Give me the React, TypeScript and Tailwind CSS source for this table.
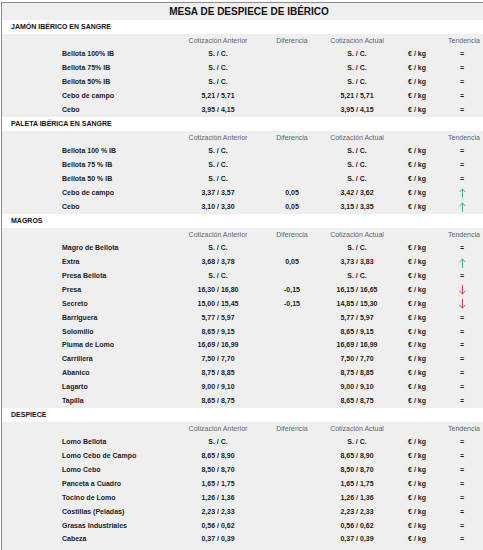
import React from "react";

type Trend = "eq" | "up" | "down";

type Row = {
  name: string;
  before: string;
  diff?: string;
  now: string;
  trend: Trend;
};

type Section = {
  title: string;
  rows: Row[];
};

const SECTIONS: Section[] = [
  {
    title: "JAMÓN IBÉRICO EN SANGRE",
    rows: [
      { name: "Bellota 100% IB", before: "S. / C.", now: "S. / C.", trend: "eq" },
      { name: "Bellota 75% IB", before: "S. / C.", now: "S. / C.", trend: "eq" },
      { name: "Bellota 50% IB", before: "S. / C.", now: "S. / C.", trend: "eq" },
      { name: "Cebo de campo", before: "5,21 / 5,71", now: "5,21 / 5,71", trend: "eq" },
      { name: "Cebo", before: "3,95 / 4,15", now: "3,95 / 4,15", trend: "eq" },
    ],
  },
  {
    title: "PALETA IBÉRICA EN SANGRE",
    rows: [
      { name: "Bellota 100 % IB", before: "S. / C.", now: "S. / C.", trend: "eq" },
      { name: "Bellota 75 % IB", before: "S. / C.", now: "S. / C.", trend: "eq" },
      { name: "Bellota 50 % IB", before: "S. / C.", now: "S. / C.", trend: "eq" },
      { name: "Cebo de campo", before: "3,37 / 3,57", diff: "0,05", now: "3,42 / 3,62", trend: "up" },
      { name: "Cebo", before: "3,10 / 3,30", diff: "0,05", now: "3,15 / 3,35", trend: "up" },
    ],
  },
  {
    title: "MAGROS",
    rows: [
      { name: "Magro de Bellota", before: "S. / C.", now: "S. / C.", trend: "eq" },
      { name: "Extra", before: "3,68 / 3,78", diff: "0,05", now: "3,73 / 3,83", trend: "up" },
      { name: "Presa Bellota", before: "S. / C.", now: "S. / C.", trend: "eq" },
      { name: "Presa", before: "16,30 / 16,80", diff: "-0,15", now: "16,15 / 16,65", trend: "down" },
      { name: "Secreto", before: "15,00 / 15,45", diff: "-0,15", now: "14,85 / 15,30", trend: "down" },
      { name: "Barriguera", before: "5,77 / 5,97", now: "5,77 / 5,97", trend: "eq" },
      { name: "Solomillo", before: "8,65 / 9,15", now: "8,65 / 9,15", trend: "eq" },
      { name: "Pluma de Lomo", before: "16,69 / 16,99", now: "16,69 / 16,99", trend: "eq" },
      { name: "Carrillera", before: "7,50 / 7,70", now: "7,50 / 7,70", trend: "eq" },
      { name: "Abanico", before: "8,75 / 8,85", now: "8,75 / 8,85", trend: "eq" },
      { name: "Lagarto", before: "9,00 / 9,10", now: "9,00 / 9,10", trend: "eq" },
      { name: "Tapilla", before: "8,65 / 8,75", now: "8,65 / 8,75", trend: "eq" },
    ],
  },
  {
    title: "DESPIECE",
    rows: [
      { name: "Lomo Bellota", before: "S. / C.", now: "S. / C.", trend: "eq" },
      { name: "Lomo Cebo de Campo", before: "8,65 / 8,90", now: "8,65 / 8,90", trend: "eq" },
      { name: "Lomo Cebo", before: "8,50 / 8,70", now: "8,50 / 8,70", trend: "eq" },
      { name: "Panceta a Cuadro", before: "1,65 / 1,75", now: "1,65 / 1,75", trend: "eq" },
      { name: "Tocino de Lomo", before: "1,26 / 1,36", now: "1,26 / 1,36", trend: "eq" },
      { name: "Costillas (Peladas)", before: "2,23 / 2,33", now: "2,23 / 2,33", trend: "eq" },
      { name: "Grasas Industriales", before: "0,56 / 0,62", now: "0,56 / 0,62", trend: "eq" },
      { name: "Cabeza", before: "0,37 / 0,39", now: "0,37 / 0,39", trend: "eq" },
    ],
  },
];

const GRID =
  "grid grid-cols-[60px_118px_76px_72px_58px_62px_28px] h-[13.86px] items-center";

function TrendIcon({ trend }: { trend: Trend }) {
  if (trend === "eq") {
    return <span className="font-bold text-[#222]">=</span>;
  }
  const up = trend === "up";
  return (
    <svg
      width="7"
      height="10"
      viewBox="0 0 7 10"
      fill="none"
      stroke={up ? "#3dbb6c" : "#d0453b"}
      strokeWidth="1"
      strokeLinecap="round"
      strokeLinejoin="round"
      className="mx-auto"
    >
      {up ? (
        <>
          <path d="M3.5 9.5V1" />
          <path d="M0.8 3.8L3.5 1L6.2 3.8" />
        </>
      ) : (
        <>
          <path d="M3.5 0.5V9" />
          <path d="M0.8 6.2L3.5 9L6.2 6.2" />
        </>
      )}
    </svg>
  );
}

function ColumnHeader() {
  return (
    <div className={`${GRID} text-[7px] text-[#666]`}>
      <span />
      <span />
      <span className="text-center whitespace-nowrap">Cotización Anterior</span>
      <span className="text-center">Diferencia</span>
      <span className="text-center whitespace-nowrap">Cotización Actual</span>
      <span />
      <span className="text-center">Tendencia</span>
    </div>
  );
}

function DataRow({ row }: { row: Row }) {
  return (
    <div className={`${GRID} text-[7px] font-bold text-[#222]`}>
      <span />
      <span className="whitespace-nowrap">{row.name}</span>
      <span className="text-center whitespace-nowrap">{row.before}</span>
      <span className="text-center">{row.diff ?? ""}</span>
      <span className="text-center whitespace-nowrap">{row.now}</span>
      <span className="text-center">€ / kg</span>
      <span className="flex justify-center">
        <TrendIcon trend={row.trend} />
      </span>
    </div>
  );
}

export default function App() {
  return (
    <div className="h-screen w-full overflow-hidden bg-white font-['Liberation_Sans',Arial,sans-serif]">
      <div className="ml-px mt-[2px] w-[495px] border-l border-t border-[#8c8c8c] bg-[#efefef]">
        <div className="flex h-[17px] items-center justify-center text-[10px] font-bold text-[#111]">
          MESA DE DESPIECE DE IBÉRICO
        </div>
        {SECTIONS.map((section) => (
          <div key={section.title}>
            <div className="flex h-[13.86px] items-center bg-white pl-[9px] text-[7px] font-bold text-[#111]">
              {section.title}
            </div>
            <ColumnHeader />
            {section.rows.map((row) => (
              <DataRow key={row.name} row={row} />
            ))}
          </div>
        ))}
        <div className="h-[20px]" />
      </div>
    </div>
  );
}
